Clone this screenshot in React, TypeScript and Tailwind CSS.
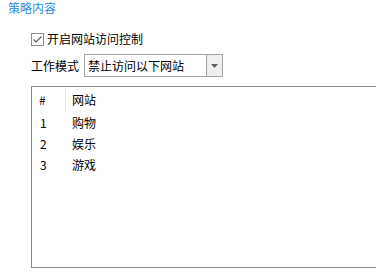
import React from "react";

const cjk = { fontFamily: '"Segoe UI", "Noto Sans CJK SC", "Noto Sans", sans-serif' };

export default function App() {
  const rows = [
    ["1", "购物"],
    ["2", "娱乐"],
    ["3", "游戏"],
  ];
  return (
    <div className="w-[376px] h-[280px] overflow-hidden bg-white text-[12px] text-black" style={cjk}>
      <div className="pl-[8px] h-[16px] leading-[16px] text-[#1f8fe0]">策略内容</div>
      <div className="mt-[15px] ml-[31px] flex items-center h-[16px] gap-[3px]">
        <div className="w-[13px] h-[13px] border border-[#8c8c8c] bg-white flex items-center justify-center">
          <svg width="11" height="11" viewBox="0 0 11 11">
            <path d="M1.5 5.5 L4 8 L9.5 2.5" fill="none" stroke="#555" strokeWidth="1.1" />
          </svg>
        </div>
        <span className="leading-[16px]">开启网站访问控制</span>
      </div>
      <div className="mt-[7px] ml-[31px] flex items-center h-[23px]">
        <span className="w-[53px] leading-[16px]">工作模式</span>
        <div className="w-[139px] h-[23px] border border-[#a6a6a6] flex items-stretch">
          <div className="flex-1 pl-[3px] flex items-center leading-[16px]">禁止访问以下网站</div>
          <div className="w-[16px] border-l border-[#a6a6a6] bg-[#efefef] flex items-center justify-center">
            <svg width="7" height="4" viewBox="0 0 7 4">
              <path d="M0 0 L7 0 L3.5 4 Z" fill="#606060" />
            </svg>
          </div>
        </div>
      </div>
      <div className="mt-[9px] ml-[31px] w-[360px] h-[182px] border border-[#828790] border-t-[#8a8e96]">
        <div className="flex h-[25px] items-center">
          <div className="w-[34px] h-[24px] pl-[7px] border-r border-[#e3e3e3] flex items-center">#</div>
          <div className="pl-[6px]">网站</div>
        </div>
        {rows.map(([n, s]) => (
          <div key={n} className="flex h-[21px] items-center">
            <div className="w-[34px] pl-[8px]">{n}</div>
            <div className="pl-[6px]">{s}</div>
          </div>
        ))}
      </div>
    </div>
  );
}
